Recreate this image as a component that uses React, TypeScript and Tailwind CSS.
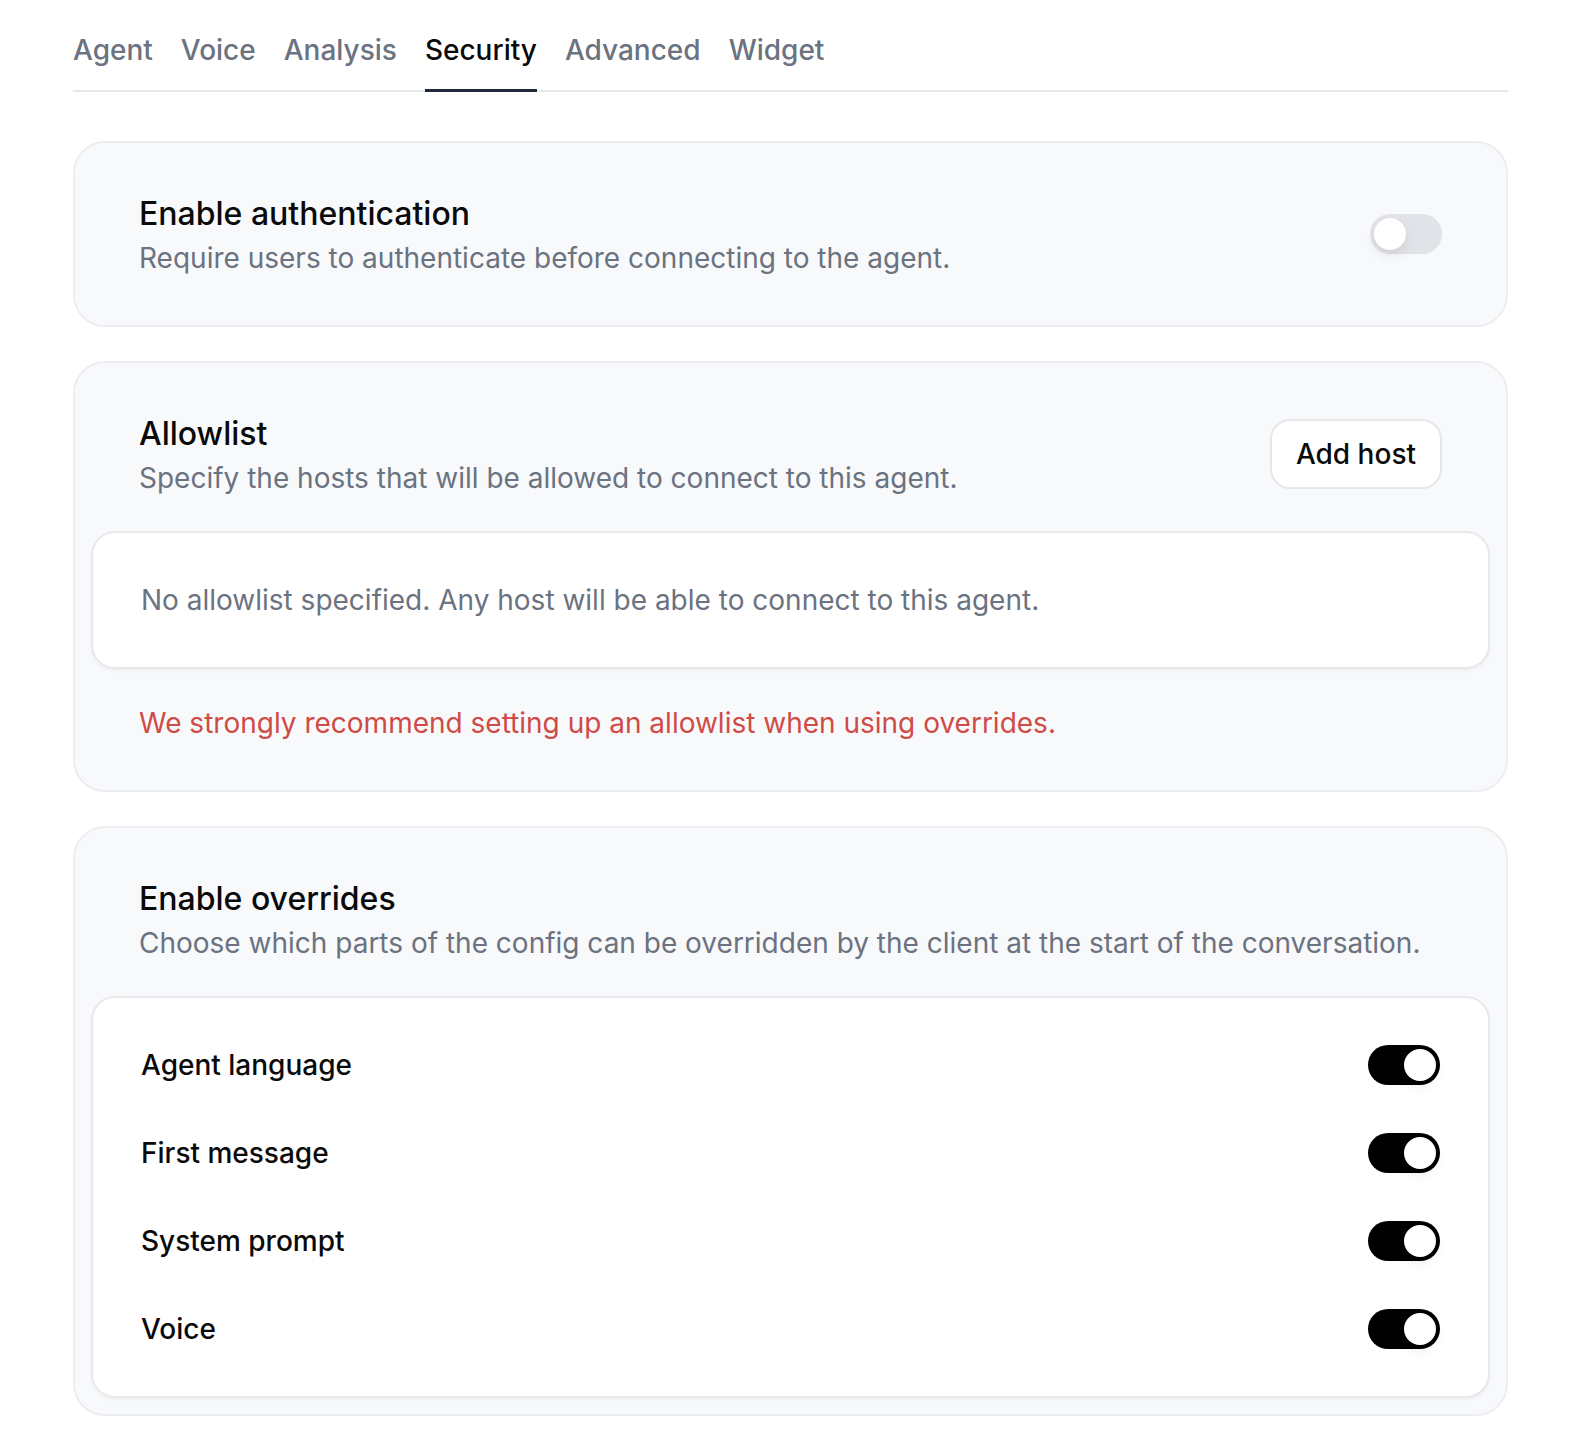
import React from "react";

const tabs = ["Agent", "Voice", "Analysis", "Security", "Advanced", "Widget"];

function Toggle({ on }: { on: boolean }) {
  return (
    <div
      className={
        on
          ? "relative flex h-[40px] w-[72px] shrink-0 items-center justify-end rounded-full bg-black px-[4px]"
          : "relative flex h-[40px] w-[72px] shrink-0 items-center justify-start rounded-full bg-[#e2e3e8] px-[4px]"
      }
    >
      <div className="h-[32px] w-[32px] rounded-full bg-white shadow-[0_6px_12px_rgba(0,0,0,0.08)]" />
    </div>
  );
}

function Header({
  title,
  desc,
  right,
}: {
  title: string;
  desc: string;
  right?: React.ReactNode;
}) {
  return (
    <div className="flex items-center justify-between px-[48px] py-[31px]">
      <div className="flex flex-col">
        <div className="text-[32px] leading-[48px] font-medium text-[#0a0a0a]">{title}</div>
        <div className="text-[28px] leading-[40px] text-[#6b7280]">{desc}</div>
      </div>
      {right}
    </div>
  );
}

export default function App() {
  const rows = ["Agent language", "First message", "System prompt", "Voice"];
  return (
    <div className="min-h-screen bg-white font-['Inter',sans-serif]">
      <div className="ml-[73px] w-[1435px] pt-[30px] pb-[20px]">
        <div className="flex gap-[28px] border-b-2 border-[#e5e7eb]">
          {tabs.map((t) => (
            <div
              key={t}
              className={
                t === "Security"
                  ? "relative pb-[20px] text-[28px] leading-[40px] font-medium text-[#0a0a0a]"
                  : "relative pb-[20px] text-[28px] leading-[40px] font-medium text-[#6b7280]"
              }
            >
              {t}
              {t === "Security" && (
                <div className="absolute bottom-[-2px] left-0 right-0 h-[3px] bg-[#1f2937]" />
              )}
            </div>
          ))}
        </div>

        <div className="mt-[49px] flex flex-col gap-[34px]">
          <div className="rounded-[32px] border-2 border-[#eceef1] bg-[#f8f9fb] p-[16px]">
            <Header
              title="Enable authentication"
              desc="Require users to authenticate before connecting to the agent."
              right={<Toggle on={false} />}
            />
          </div>

          <div className="rounded-[32px] border-2 border-[#eceef1] bg-[#f8f9fb] p-[16px]">
            <Header
              title="Allowlist"
              desc="Specify the hosts that will be allowed to connect to this agent."
              right={
                <button className="rounded-[20px] border-2 border-[#e5e7eb] bg-white px-[24px] py-[13px] text-[28px] leading-[40px] font-medium text-[#0a0a0a]">
                  Add host
                </button>
              }
            />
            <div className="mt-[2px] rounded-[24px] border-2 border-[#e8e9ec] bg-white px-[48px] py-[47px] shadow-[0_2px_3px_rgba(0,0,0,0.04)]">
              <div className="text-[28px] leading-[40px] text-[#6b7280]">
                No allowlist specified. Any host will be able to connect to this agent.
              </div>
            </div>
            <div className="px-[48px] pt-[34px] pb-[31px] text-[28px] leading-[40px] text-[#cf4b47]">
              We strongly recommend setting up an allowlist when using overrides.
            </div>
          </div>

          <div className="rounded-[32px] border-2 border-[#eceef1] bg-[#f8f9fb] p-[16px]">
            <Header
              title="Enable overrides"
              desc="Choose which parts of the config can be overridden by the client at the start of the conversation."
            />
            <div className="mt-[2px] flex flex-col gap-[48px] rounded-[24px] border-2 border-[#e8e9ec] bg-white py-[47px] pl-[48px] pr-[48px] shadow-[0_2px_3px_rgba(0,0,0,0.04)]">
              {rows.map((r) => (
                <div key={r} className="flex h-[40px] items-center justify-between">
                  <div className="text-[28px] leading-[40px] font-medium text-[#0a0a0a]">{r}</div>
                  <Toggle on={true} />
                </div>
              ))}
            </div>
          </div>
        </div>
      </div>
    </div>
  );
}
